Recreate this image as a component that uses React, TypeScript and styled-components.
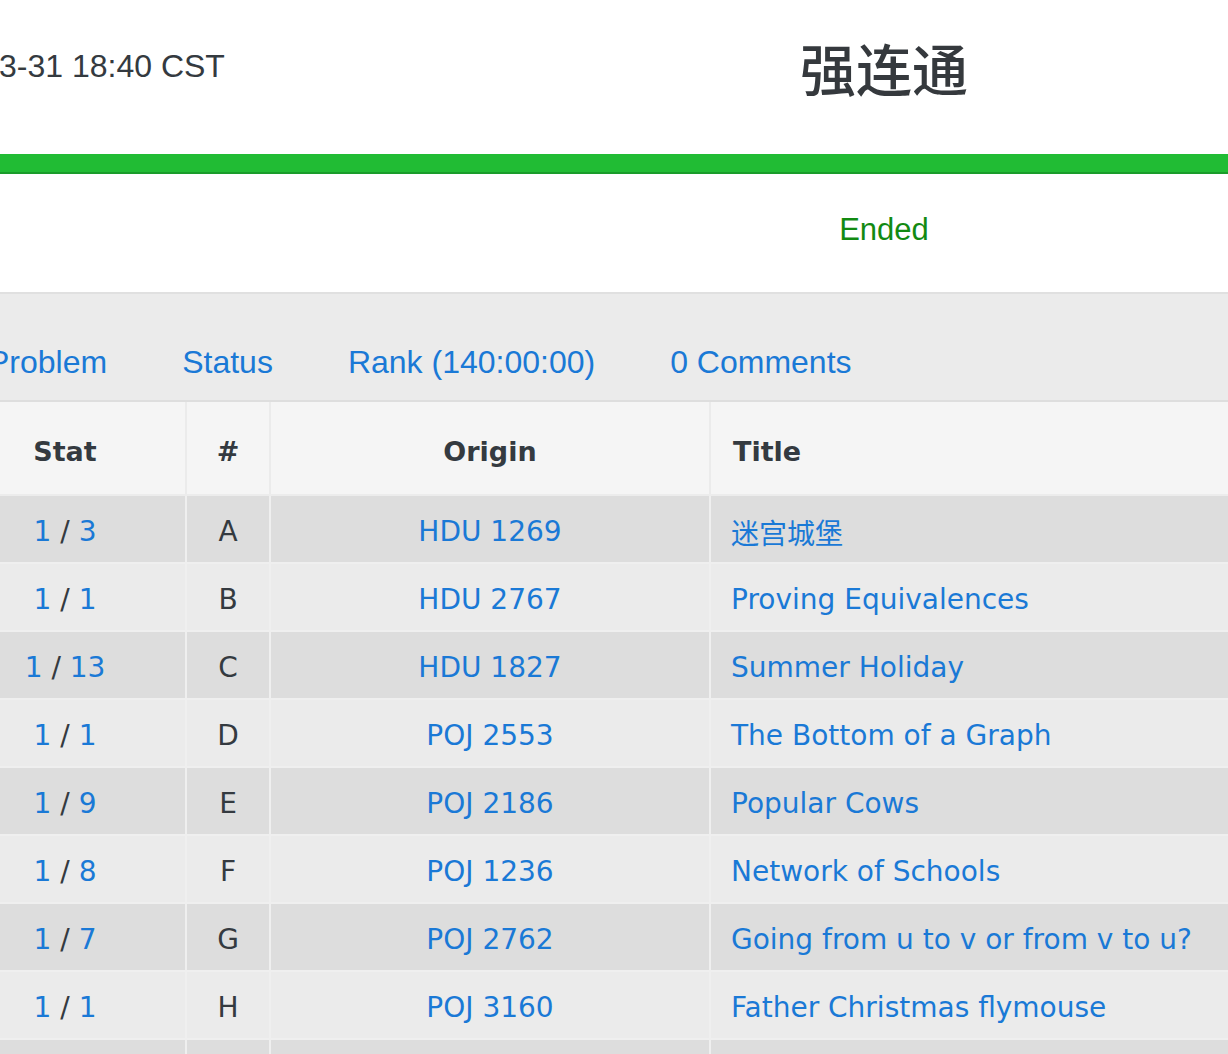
import React from "react";
import styled, { createGlobalStyle } from "styled-components";

const GlobalStyle = createGlobalStyle`
  html, body { margin: 0; padding: 0; background: #ffffff; overflow: hidden; }
  body { font-family: "Liberation Sans", Arial, sans-serif; color: #343a40; }
  a { text-decoration: none; }
`;

const Page = styled.div`
  width: 1228px;
  height: 1054px;
  overflow: hidden;
`;

const TopRow = styled.div`
  display: grid;
  grid-template-columns: 769px 230px 1fr;
  align-items: start;
  height: 154px;
`;

const DateText = styled.div`
  margin: 50px 0 0 -1px;
  font-size: 32px;
  line-height: 32px;
  white-space: nowrap;
  color: #343a40;
`;

const Title = styled.h1`
  margin: 39px 0 0;
  text-align: center;
  white-space: nowrap;
  font: 500 56px/56px "Noto Sans CJK SC", sans-serif;
  color: #35393d;
`;

const Progress = styled.div`
  height: 18px;
  background: #21bc34;
  border-bottom: 2px solid #1a9c2a;
`;

const StatusRow = styled.div`
  display: grid;
  grid-template-columns: 769px 230px 1fr;
  align-items: start;
  height: 118px;
`;

const Ended = styled.div`
  grid-column: 2;
  margin-top: 40px;
  text-align: center;
  font-size: 31px;
  line-height: 31px;
  color: #128a12;
`;

const Panel = styled.section`
  border-top: 2px solid #e0e0e0;
  background: #ebebeb;
`;

const Nav = styled.nav`
  display: flex;
  gap: 75px;
  margin-left: -12px;
  padding: 52px 0 22px;
  border-bottom: 2px solid #dedede;
`;

const NavLink = styled.a`
  font-size: 32px;
  line-height: 32px;
  color: #1a79d6;
  white-space: nowrap;
`;

const Table = styled.table`
  margin-left: -57px;
  width: 1400px;
  table-layout: fixed;
  border-collapse: collapse;
  font-family: "DejaVu Sans", Verdana, "Noto Sans CJK SC", sans-serif;
`;

const HeadCell = styled.th<{ $align?: string }>`
  height: 86px;
  padding: 6px 0 0;
  padding-left: ${(p) => (p.$align === "left" ? "22px" : "0")};
  text-align: ${(p) => p.$align || "center"};
  font-size: 27px;
  font-weight: 700;
  color: #343a40;
  background: #f5f5f5;
  border-left: 2px solid #ebebeb;
  border-right: 2px solid #ebebeb;
  border-bottom: 2px solid #ececec;
`;

const Row = styled.tr<{ $dark: boolean }>`
  background: ${(p) => (p.$dark ? "#dddddd" : "#ebebeb")};
`;

const Cell = styled.td<{ $align?: string }>`
  height: 61px;
  padding: 5px 0 0;
  padding-left: ${(p) => (p.$align === "left" ? "20px" : "0")};
  text-align: ${(p) => p.$align || "center"};
  vertical-align: middle;
  font-size: 28px;
  color: #343a40;
  white-space: nowrap;
  border: 2px solid #efefef;
`;

const Link = styled.a`
  color: #1a79d6;
`;

const Slash = styled.span`
  color: #343a40;
`;

const problems = [
  { ac: 1, all: 3, id: "A", origin: "HDU 1269", title: "迷宫城堡" },
  { ac: 1, all: 1, id: "B", origin: "HDU 2767", title: "Proving Equivalences" },
  { ac: 1, all: 13, id: "C", origin: "HDU 1827", title: "Summer Holiday" },
  { ac: 1, all: 1, id: "D", origin: "POJ 2553", title: "The Bottom of a Graph" },
  { ac: 1, all: 9, id: "E", origin: "POJ 2186", title: "Popular Cows" },
  { ac: 1, all: 8, id: "F", origin: "POJ 1236", title: "Network of Schools" },
  { ac: 1, all: 7, id: "G", origin: "POJ 2762", title: "Going from u to v or from v to u?" },
  { ac: 1, all: 1, id: "H", origin: "POJ 3160", title: "Father Christmas flymouse" },
];

export default function App() {
  return (
    <Page>
      <GlobalStyle />
      <TopRow>
        <DateText>3-31 18:40 CST</DateText>
        <Title>强连通</Title>
      </TopRow>
      <Progress />
      <StatusRow>
        <Ended>Ended</Ended>
      </StatusRow>
      <Panel>
        <Nav>
          <NavLink href="#">Problem</NavLink>
          <NavLink href="#">Status</NavLink>
          <NavLink href="#">Rank (140:00:00)</NavLink>
          <NavLink href="#">0 Comments</NavLink>
        </Nav>
        <Table>
          <colgroup>
            <col style={{ width: 242 }} />
            <col style={{ width: 84 }} />
            <col style={{ width: 440 }} />
            <col />
          </colgroup>
          <thead>
            <tr>
              <HeadCell>Stat</HeadCell>
              <HeadCell>#</HeadCell>
              <HeadCell>Origin</HeadCell>
              <HeadCell $align="left">Title</HeadCell>
            </tr>
          </thead>
          <tbody>
            {problems.map((p, i) => (
              <Row key={p.id} $dark={i % 2 === 0}>
                <Cell>
                  <Link href="#">{p.ac}</Link> <Slash>/</Slash> <Link href="#">{p.all}</Link>
                </Cell>
                <Cell>{p.id}</Cell>
                <Cell>
                  <Link href="#">{p.origin}</Link>
                </Cell>
                <Cell $align="left">
                  <Link href="#">{p.title}</Link>
                </Cell>
              </Row>
            ))}
            <Row $dark>
              <Cell />
              <Cell />
              <Cell />
              <Cell $align="left" />
            </Row>
          </tbody>
        </Table>
      </Panel>
    </Page>
  );
}
